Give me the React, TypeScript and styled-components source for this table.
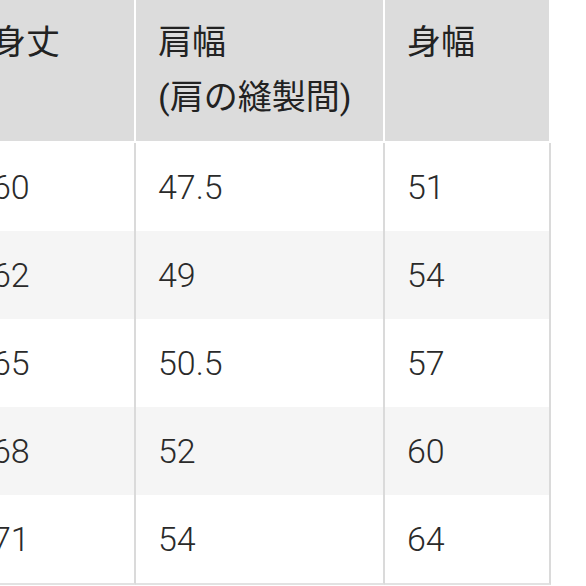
import styled, { createGlobalStyle } from "styled-components";

const GlobalStyle = createGlobalStyle`
    html, body {
        margin: 0;
        padding: 0;
        background: #ffffff;
        overflow: hidden;
    }
    body {
        font-family: Roboto, "Noto Sans CJK JP", sans-serif;
        color: #333333;
    }
`;

const Frame = styled.div`
    width: 586px;
    height: 586px;
    overflow: hidden;
`;

// the table starts left of the window: its first column is cut off
const SizeTable = styled.table`
    margin-left: -30px;
    border-collapse: separate;
    border-spacing: 0;
    table-layout: fixed;
    width: 581px;
    font-size: 34px;
    font-weight: 300;
`;

const Col = styled.col<{ $w: number }>`
    width: ${(p) => p.$w}px;
`;

const HeadCell = styled.th`
    background: #dcdcdc;
    text-align: left;
    vertical-align: top;
    font-weight: 400;
    line-height: 55px;
    padding: 15px 22px 16px 22px;
    border-right: 2px solid #ffffff;
    border-bottom: 2px solid #ffffff;
    color: #222222;
`;

const Row = styled.tr<{ $striped: boolean }>`
    background: ${(p) => (p.$striped ? "#f5f5f5" : "#ffffff")};
`;

const Cell = styled.td<{ $last: boolean }>`
    height: 56px;
    line-height: 56px;
    padding: 16px 22px 16px 22px;
    border-right: 2px solid #dadada;
    border-bottom: ${(p) => (p.$last ? "2px solid #e2e2e2" : "none")};
    color: #2a2a2a;
`;

const rows = [
    ["60", "47.5", "51"],
    ["62", "49", "54"],
    ["65", "50.5", "57"],
    ["68", "52", "60"],
    ["71", "54", "64"],
];

function App() {
    return (
        <Frame>
            <GlobalStyle />
            <SizeTable>
                <colgroup>
                    <Col $w={166} />
                    <Col $w={249} />
                    <Col $w={166} />
                </colgroup>
                <thead>
                    <tr>
                        <HeadCell>身丈</HeadCell>
                        <HeadCell>
                            肩幅
                            <br />
                            (肩の縫製間)
                        </HeadCell>
                        <HeadCell>身幅</HeadCell>
                    </tr>
                </thead>
                <tbody>
                    {rows.map((r, i) => (
                        <Row key={i} $striped={i % 2 === 1}>
                            {r.map((v, j) => (
                                <Cell key={j} $last={i === rows.length - 1}>
                                    {v}
                                </Cell>
                            ))}
                        </Row>
                    ))}
                </tbody>
            </SizeTable>
        </Frame>
    );
}

export default App;
